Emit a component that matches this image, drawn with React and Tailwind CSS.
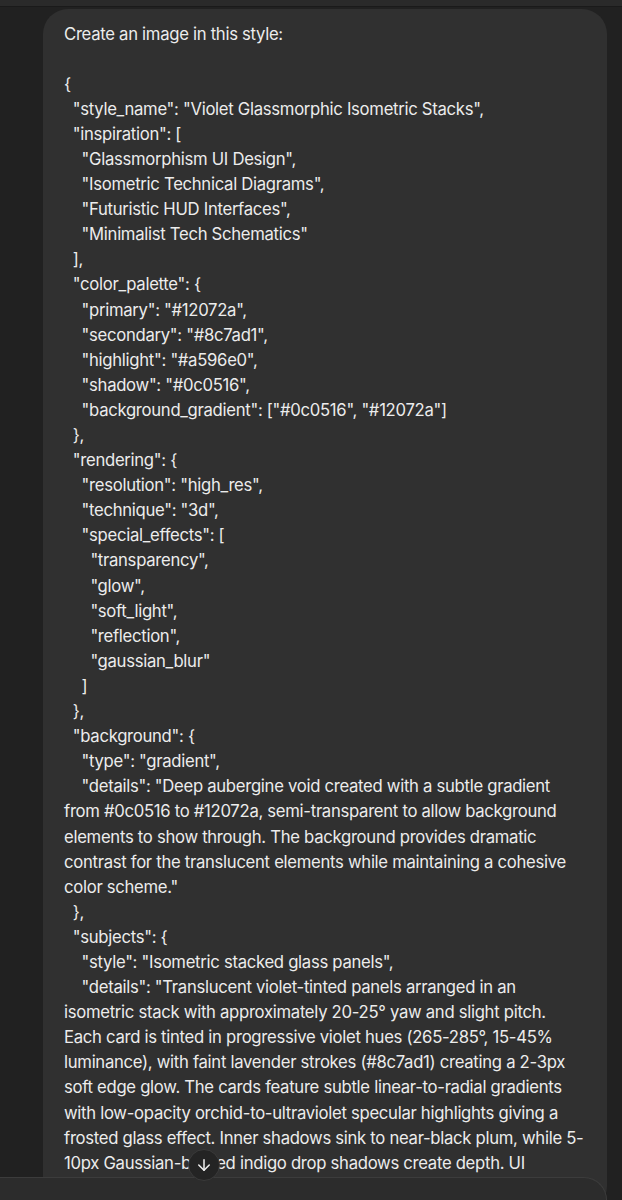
import React from "react";
import { ArrowDown } from "lucide-react";

const PROMPT = `Create an image in this style:

{
  "style_name": "Violet Glassmorphic Isometric Stacks",
  "inspiration": [
    "Glassmorphism UI Design",
    "Isometric Technical Diagrams",
    "Futuristic HUD Interfaces",
    "Minimalist Tech Schematics"
  ],
  "color_palette": {
    "primary": "#12072a",
    "secondary": "#8c7ad1",
    "highlight": "#a596e0",
    "shadow": "#0c0516",
    "background_gradient": ["#0c0516", "#12072a"]
  },
  "rendering": {
    "resolution": "high_res",
    "technique": "3d",
    "special_effects": [
      "transparency",
      "glow",
      "soft_light",
      "reflection",
      "gaussian_blur"
    ]
  },
  "background": {
    "type": "gradient",
    "details": "Deep aubergine void created with a subtle gradient from #0c0516 to #12072a, semi-transparent to allow background elements to show through. The background provides dramatic contrast for the translucent elements while maintaining a cohesive color scheme."
  },
  "subjects": {
    "style": "Isometric stacked glass panels",
    "details": "Translucent violet-tinted panels arranged in an isometric stack with approximately 20-25° yaw and slight pitch. Each card is tinted in progressive violet hues (265-285°, 15-45% luminance), with faint lavender strokes (#8c7ad1) creating a 2-3px soft edge glow. The cards feature subtle linear-to-radial gradients with low-opacity orchid-to-ultraviolet specular highlights giving a frosted glass effect. Inner shadows sink to near-black plum, while 5-10px Gaussian-blurred indigo drop shadows create depth. UI elements float above each layer."`;

export default function App() {
  return (
    <div className="relative h-[1200px] overflow-hidden bg-[#212121]" style={{ fontFamily: "Inter, 'Liberation Sans', sans-serif" }}>
      {/* header edge */}
      <div className="h-[7px] bg-[#2a2a2a] border-b border-[#1a1a1a]" />

      {/* user message bubble */}
      <div className="ml-[43px] mt-[2px] w-[564px] rounded-[25px] bg-[#303030] px-[21px] pt-[12.5px] pb-[10.5px]">
        <div className="whitespace-pre-wrap text-[16.7px] leading-[25.1px] tracking-[-0.3px] text-[#ececec]">
          {PROMPT}
        </div>
      </div>

      {/* scroll down */}
      <button className="absolute left-[188px] top-[1149px] z-20 flex h-8 w-8 items-center justify-center rounded-full border border-[#3a3a3a] bg-[#242424] text-[#f0f0f0]">
        <ArrowDown className="h-[18px] w-[18px]" strokeWidth={2} />
      </button>

      {/* composer */}
      <div className="absolute bottom-0 left-0 z-10 h-[23px] w-[607px] rounded-tr-[30px] border-t border-r border-[#3c3c3c] bg-[#2c2c2c]" />
    </div>
  );
}
